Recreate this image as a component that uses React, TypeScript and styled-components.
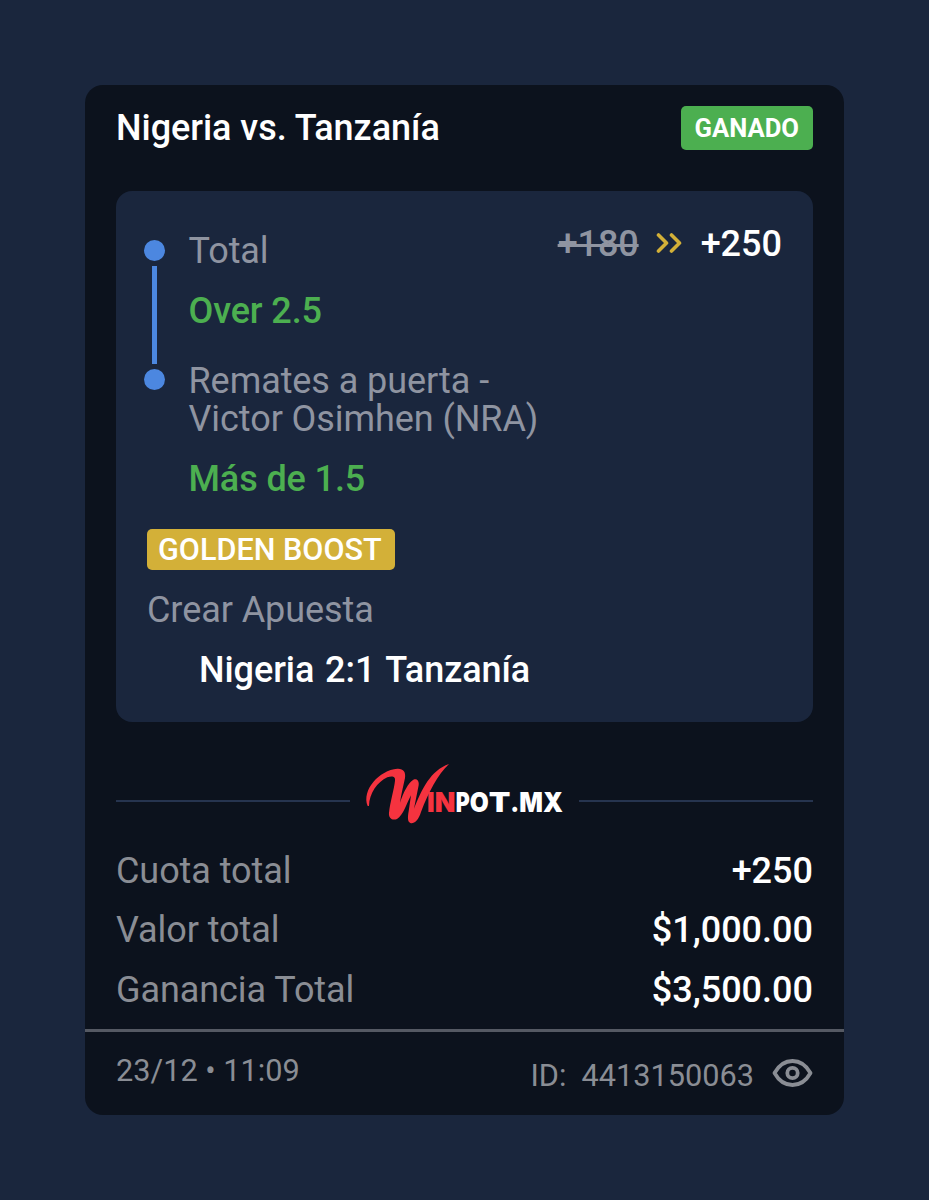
import React from "react";
import styled, { createGlobalStyle } from "styled-components";

const GlobalStyle = createGlobalStyle`
  * { box-sizing: border-box; }
  body {
    margin: 0;
    background: #1a263d;
    font-family: Roboto, "Liberation Sans", sans-serif;
    font-size: 36px;
    line-height: 42px;
    color: #ffffff;
  }
`;

const Page = styled.main`
  min-height: 1200px;
  padding: 85px;
`;

const Card = styled.article`
  display: flex;
  flex-direction: column;
  width: 759px;
  height: 1029.5px;
  border-radius: 18px;
  background: #0c121d;
  overflow: hidden;
`;

const Header = styled.header`
  display: flex;
  justify-content: space-between;
  align-items: center;
  height: 44px;
  margin: 21px 31px 0;
`;

const Title = styled.h1`
  margin: 0;
  font-size: 36px;
  font-weight: 500;
  letter-spacing: -0.04px;
  line-height: 42px;
`;

const Status = styled.span`
  height: 44px;
  padding: 0 14px;
  border-radius: 5px;
  background: #4caf50;
  font-size: 25.6px;
  font-weight: 700;
  line-height: 44px;
`;

const Panel = styled.section`
  display: flex;
  flex-direction: column;
  height: 531px;
  margin: 41px 31px 0;
  padding: 31px;
  border-radius: 16px;
  background: #1a263d;
`;

const Legs = styled.div`
  display: flex;
  align-items: flex-start;
`;

const Rail = styled.div`
  display: flex;
  flex-direction: column;
  align-items: center;
  width: 21px;
  margin: 18px 23.5px 0 -3px;
`;

const Dot = styled.i`
  width: 21px;
  height: 21px;
  border-radius: 50%;
  background: #4c87e0;
`;

const Link = styled.i`
  width: 5px;
  height: 98px;
  margin: 5px 0;
  background: #4c87e0;
`;

const LegList = styled.div`
  flex: 1;
  padding-top: 10px;
`;

const Leg = styled.div`
  & + & { margin-top: 31px; }
`;

const Muted = styled.p`
  margin: 0;
  color: #8f94a1;
  letter-spacing: -0.07px;
  line-height: 38.5px;
`;

const Pick = styled.p`
  margin: 20px 0 0;
  color: #4caf50;
  font-weight: 500;
  letter-spacing: -0.12px;
  line-height: 40px;
`;

const Odds = styled.div`
  display: flex;
  align-items: center;
  padding-top: 1px;
  font-weight: 500;
`;

const OldOdds = styled.s`
  color: #8f94a1;
  letter-spacing: -0.1px;
  text-decoration-thickness: 3px;
`;

const Chevrons = styled.svg`
  width: 26px;
  height: 22px;
  margin: -2px 19px 0 17px;
`;

const Boost = styled.span`
  align-self: flex-start;
  height: 41px;
  margin-top: 30px;
  padding: 0 13px 0 11px;
  border-radius: 5px;
  background: #d3b038;
  font-size: 30.6px;
  font-weight: 500;
  line-height: 41px;
`;

const BetType = styled(Muted)`
  margin-top: 19px;
  line-height: 42px;
`;

const Score = styled.p`
  margin: 18px 0 0 52px;
  font-weight: 500;
  letter-spacing: -0.06px;
  word-spacing: 1.9px;
`;

const Brand = styled.div`
  display: flex;
  align-items: center;
  gap: 14.5px;
  height: 64px;
  margin: 40px 31px 0;
`;

const Rule = styled.i`
  flex: 1;
  height: 2px;
  margin-top: 14px;
  background: #26344f;
`;

const Logo = styled.svg`
  width: 200px;
  height: 64px;
  overflow: visible;
`;

const Totals = styled.dl`
  display: flex;
  flex-direction: column;
  gap: 17.4px;
  margin: 24px 31px 0;
`;

const TotalRow = styled.div`
  display: flex;
  justify-content: space-between;
`;

const Label = styled.dt`
  color: #8a8d94;
  letter-spacing: -0.07px;
`;

const Value = styled.dd`
  margin: 0;
  font-weight: 500;
`;

const Footer = styled.footer`
  display: flex;
  justify-content: space-between;
  margin-top: 18.2px;
  padding: 21px 31px 0;
  border-top: 3px solid #555963;
  color: #8a8d94;
  font-size: 30.7px;
  line-height: 36px;
`;

const Ticket = styled.div`
  display: flex;
  padding-top: 5px;
  white-space: pre;
`;

const Eye = styled.svg`
  width: 41px;
  height: 30px;
  margin-left: 18px;
`;

const totals = [
  ["Cuota total", "+250"],
  ["Valor total", "$1,000.00"],
  ["Ganancia Total", "$3,500.00"],
];

// Each letter of the wordmark with its start and advance width.
const wordmark: [string, number, number][] = [
  ["I", 261, 23],
  ["N", 284, 62],
  ["P", 347, 42],
  ["O", 389, 57],
  ["T", 446, 65],
  [".", 511, 27],
  ["M", 538, 71],
  ["X", 609, 60],
];

export default function App() {
  return (
    <Page>
      <GlobalStyle />
      <Card>
        <Header>
          <Title>Nigeria vs. Tanzanía</Title>
          <Status>GANADO</Status>
        </Header>
        <Panel>
          <Legs>
            <Rail>
              <Dot />
              <Link />
              <Dot />
            </Rail>
            <LegList>
              <Leg>
                <Muted>Total</Muted>
                <Pick>Over 2.5</Pick>
              </Leg>
              <Leg>
                <Muted>
                  Remates a puerta -<br />
                  Victor Osimhen (NRA)
                </Muted>
                <Pick>Más de 1.5</Pick>
              </Leg>
            </LegList>
            <Odds>
              <OldOdds>+180</OldOdds>
              <Chevrons viewBox="0 0 26 22" fill="none" stroke="#d3b038" strokeWidth="3.6" strokeLinecap="round" strokeLinejoin="round">
                <path d="M2.5 3 10.5 11 2.5 19M15.5 3 23.5 11 15.5 19" />
              </Chevrons>
              <span>+250</span>
            </Odds>
          </Legs>
          <Boost>GOLDEN BOOST</Boost>
          <BetType>Crear Apuesta</BetType>
          <Score>Nigeria 2:1 Tanzanía</Score>
        </Panel>
        <Brand>
          <Rule />
          <Logo viewBox="75 36 600 192">
            <path
              fill="#f5333f"
              d="M83 168C64 120 118 60 172 56C190 55 198 66 195 84C190 108 183 136 180 158C190 128 204 98 220 89C231 84 238 93 236 106L222 176C244 120 272 60 327 42C294 72 265 128 243 186C235 212 222 222 211 219C202 216 203 200 206 184L213 136C200 160 190 196 171 207C157 213 145 204 147 188C150 158 163 114 165 92C167 77 154 78 142 82C112 96 88 130 87 168Z"
            />
            <text y="187" fontFamily="Inter, sans-serif" fontWeight="900" fontSize="81">
              {wordmark.map(([letter, x, width], i) => (
                <tspan key={letter} x={x} textLength={width} lengthAdjust="spacingAndGlyphs" fill={i < 2 ? "#f5333f" : "#fff"}>
                  {letter}
                </tspan>
              ))}
            </text>
          </Logo>
          <Rule />
        </Brand>
        <Totals>
          {totals.map(([label, value]) => (
            <TotalRow key={label}>
              <Label>{label}</Label>
              <Value>{value}</Value>
            </TotalRow>
          ))}
        </Totals>
        <Footer>
          <span>23/12 • 11:09</span>
          <Ticket>
            <span>ID:  4413150063</span>
            <Eye viewBox="0 0 41 30" fill="none" stroke="#8a8d94" strokeWidth="3.8" strokeLinejoin="round">
              <path d="M2.5 15C7 7 13 3 20.5 3S34 7 38.5 15C34 23 28 27 20.5 27S7 23 2.5 15Z" />
              <circle cx="20.5" cy="15" r="5.2" />
            </Eye>
          </Ticket>
        </Footer>
      </Card>
    </Page>
  );
}
